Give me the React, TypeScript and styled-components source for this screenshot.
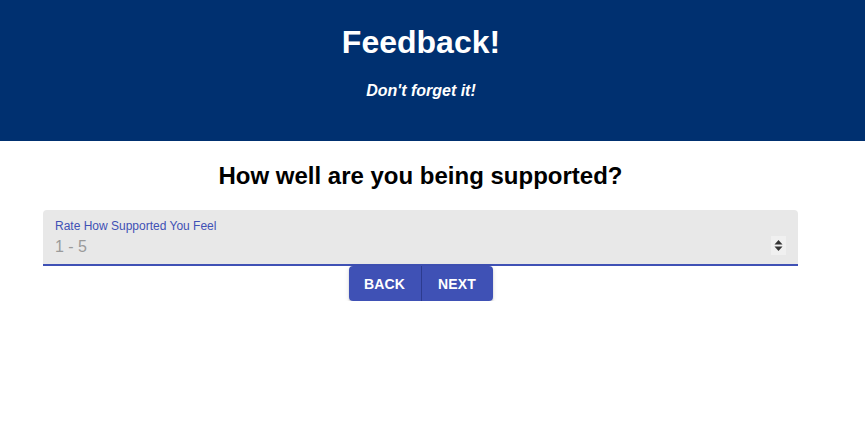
import React from "react";
import styled, { createGlobalStyle } from "styled-components";

const Global = createGlobalStyle`
  html, body { margin: 0; padding: 0; background: #fff; }
  body { font-family: "Liberation Sans", Arial, sans-serif; }
`;

const Page = styled.div`
  width: 841px;
`;

const Header = styled.header`
  width: 865px;
  height: 141px;
  background: #003070;
  color: #fff;
  box-sizing: border-box;
  padding-top: 24px;
`;

const HeaderInner = styled.div`
  width: 842px;
  display: flex;
  flex-direction: column;
  align-items: center;
`;

const Title = styled.h1`
  margin: 0;
  font-size: 32px;
  line-height: 37px;
  font-weight: 700;
`;

const Subtitle = styled.p`
  margin: 20px 0 0;
  font-size: 16px;
  line-height: 19px;
  font-weight: 700;
  font-style: italic;
`;

const Main = styled.main`
  display: flex;
  flex-direction: column;
  align-items: center;
`;

const Question = styled.h2`
  margin: 21px 0 0;
  font-size: 24px;
  line-height: 28px;
  font-weight: 700;
  color: #000;
`;

const Field = styled.div`
  margin-top: 20px;
  width: 755px;
  height: 56px;
  box-sizing: border-box;
  background: #e8e8e8;
  border-radius: 4px 4px 0 0;
  border-bottom: 2px solid #3f51b5;
  padding: 9px 12px 0;
  display: flex;
  align-items: flex-end;
  justify-content: space-between;
`;

const FieldText = styled.div`
  display: flex;
  flex-direction: column;
  padding-bottom: 8px;
`;

const Label = styled.label`
  font-size: 12px;
  line-height: 14px;
  color: #3f51b5;
`;

const Value = styled.span`
  margin-top: 4px;
  font-size: 16px;
  line-height: 19px;
  color: #9a9a9a;
`;

const Spinner = styled.div`
  width: 15px;
  height: 19px;
  background: #f0f0f0;
  margin-bottom: 9px;
  display: flex;
  align-items: center;
  justify-content: center;
`;

const ButtonGroup = styled.div`
  display: flex;
  border-radius: 4px;
  overflow: hidden;
  box-shadow: 0 3px 1px -2px rgba(0,0,0,0.2), 0 2px 2px 0 rgba(0,0,0,0.14), 0 1px 5px 0 rgba(0,0,0,0.12);
`;

const Button = styled.button<{ $w: number; $divider?: boolean }>`
  width: ${(p) => p.$w}px;
  height: 35px;
  border: none;
  border-right: ${(p) => (p.$divider ? "1px solid #2c3b8f" : "none")};
  background: #3f51b5;
  color: #fff;
  font-family: "Liberation Sans", Arial, sans-serif;
  font-size: 14px;
  font-weight: 700;
  letter-spacing: 0.2px;
  text-transform: uppercase;
  padding: 0;
  cursor: pointer;
`;

export default function App() {
  return (
    <Page>
      <Global />
      <Header>
        <HeaderInner>
          <Title>Feedback!</Title>
          <Subtitle>Don't forget it!</Subtitle>
        </HeaderInner>
      </Header>
      <Main>
        <Question>How well are you being supported?</Question>
        <Field>
          <FieldText>
            <Label>Rate How Supported You Feel</Label>
            <Value>1 - 5</Value>
          </FieldText>
          <Spinner>
            <svg width="9" height="13" viewBox="0 0 9 13">
              <path d="M4.5 1 L8.5 5.5 L0.5 5.5 Z" fill="#333" />
              <path d="M4.5 12 L8.5 7.5 L0.5 7.5 Z" fill="#333" />
            </svg>
          </Spinner>
        </Field>
        <ButtonGroup>
          <Button $w={73} $divider>Back</Button>
          <Button $w={71}>Next</Button>
        </ButtonGroup>
      </Main>
    </Page>
  );
}
